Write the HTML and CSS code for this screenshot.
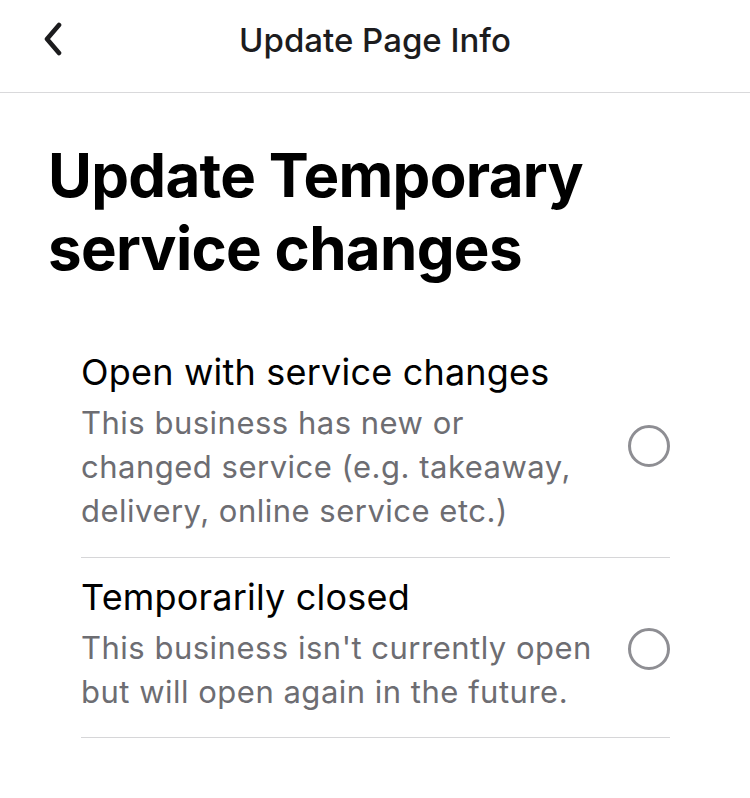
FILE: index.html
```html
<!DOCTYPE html>
<html lang="en">
  <head>
    <meta charset="UTF-8" />
    <title>Update Page Info</title>
    <link rel="stylesheet" href="styles.css">
  </head>
  <body>
    <!-- Nav bar -->
    <div class="nav-bar">
      <a class="back" href="#" aria-label="Back">
        <svg width="22" height="34" viewBox="0 0 22 34">
          <path d="M17 3 L5 17 L17 31" fill="none" stroke="#1c1c1e" stroke-width="4.6" stroke-linecap="round" stroke-linejoin="round"/>
        </svg>
      </a>
      <div class="nav-title">Update Page Info</div>
      <div></div>
    </div>

    <div class="content">
      <h1>Update Temporary service changes</h1>

      <ul class="options">
        <li class="option">
          <div class="option-text">
            <div class="option-title">Open with service changes</div>
            <div class="option-desc">This business has new or changed service (e.g. takeaway, delivery, online service etc.)</div>
          </div>
          <span class="radio"></span>
        </li>
        <li class="option">
          <div class="option-text">
            <div class="option-title">Temporarily closed</div>
            <div class="option-desc">This business isn't currently open but will open again in the future.</div>
          </div>
          <span class="radio"></span>
        </li>
      </ul>
    </div>
  </body>
</html>
```

FILE: styles.css
```css
* {
  margin: 0;
  padding: 0;
  box-sizing: border-box;
}

body {
  font-family: Inter, Roboto, "Liberation Sans", sans-serif;
  background: #fff;
  color: #000;
}

/* --- Nav bar --- */
.nav-bar {
  height: 93px;
  border-bottom: 1px solid #d9d9db;
  display: grid;
  grid-template-columns: 1fr auto 1fr;
  align-items: center;
  padding-bottom: 12px;
}
.back {
  display: flex;
  padding-left: 42px;
  margin-top: -2px;
}
.nav-title {
  font-size: 33px;
  font-weight: 500;
  color: #1c1c1e;
}

/* --- Main content --- */
.content {
  padding: 46px 80px 0 48px;
}
h1 {
  font-size: 60px;
  font-weight: 700;
  line-height: 73px;
  letter-spacing: -0.7px;
}

.options {
  list-style: none;
  margin: 65px 0 0 33px;
}
.option {
  display: flex;
  align-items: center;
  gap: 34px;
  border-bottom: 1px solid #d6d6d8;
  padding-bottom: 24px;
}
.option + .option {
  padding-top: 17px;
  padding-bottom: 23px;
}
.option-text {
  flex: 1;
}
.option-title {
  font-size: 36px;
  line-height: 44px;
  letter-spacing: 0.2px;
  margin-bottom: 7px;
}
.option-desc {
  font-size: 31px;
  line-height: 44px;
  letter-spacing: 0.5px;
  color: #6d6d72;
}
.radio {
  width: 42px;
  height: 42px;
  margin-top: 8px;
  border: 3.5px solid #8e8e93;
  border-radius: 50%;
  flex-shrink: 0;
}
```
